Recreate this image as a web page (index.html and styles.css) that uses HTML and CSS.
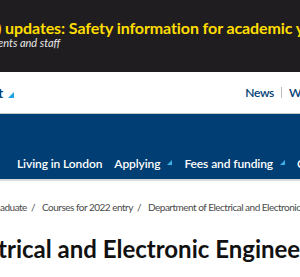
FILE: index.html
```html
<!DOCTYPE html>
<html lang="en">
<head>
<meta charset="utf-8">
<link rel="stylesheet" href="styles.css">
</head>
<body>
<div class="page">
  <div class="alert">
    <p class="alert-title">) updates: Safety information for academic year 2021–22</p>
    <p class="alert-sub">ents and staff</p>
  </div>
  <div class="header">
    <div class="brand">t<span class="tri"></span></div>
    <div class="quick">
      <a class="quick-link">News</a>
      <span class="quick-sep"></span>
      <a class="quick-link">What's on</a>
    </div>
  </div>
  <nav class="nav">
    <span class="nav-tail"></span>
    <span class="nav-sep"></span>
    <a class="nav-item">Living in London</a>
    <span class="nav-sep"></span>
    <a class="nav-item">Applying<span class="tri small"></span></a>
    <span class="nav-sep"></span>
    <a class="nav-item">Fees and funding<span class="tri small"></span></a>
    <span class="nav-sep"></span>
    <a class="nav-item">Contact us</a>
  </nav>
  <div class="crumbs">
    <span>aduate</span><span class="slash">/</span>
    <span>Courses for 2022 entry</span><span class="slash">/</span>
    <span>Department of Electrical and Electronic Engineering</span>
  </div>
  <h1 class="title">trical and Electronic Engineering</h1>
</div>
</body>
</html>
```
FILE: styles.css
```css
html, body {
  margin: 0;
  padding: 0;
  background: #fff;
}
.page {
  width: 300px;
  height: 277px;
  overflow: hidden;
  font-family: Lato, "Open Sans", sans-serif;
  white-space: nowrap;
}
.alert {
  background: #1f1d1f;
  height: 72px;
  box-sizing: border-box;
  padding-top: 19px;
  overflow: hidden;
}
.alert-title {
  margin: 0 0 0 -3px;
  color: #ffdd00;
  font-weight: 700;
  font-size: 16px;
  letter-spacing: -0.1px;
  line-height: 18px;
}
.alert-sub {
  margin: -1px 0 0 -2px;
  color: #e8e8e8;
  font-style: italic;
  font-size: 11px;
  line-height: 14px;
}
.header {
  height: 41px;
  border-bottom: 1px solid #c9c9c9;
  display: flex;
  align-items: center;
  justify-content: space-between;
  overflow: hidden;
}
.brand {
  margin-left: -2px;
  color: #003e74;
  font-weight: 700;
  font-size: 14px;
  display: flex;
  align-items: flex-end;
  gap: 5px;
}
.tri {
  display: inline-block;
  width: 0;
  height: 0;
  border-left: 6px solid transparent;
  border-bottom: 6px solid #1ea4e0;
  margin-bottom: 3px;
}
.tri.small {
  border-left-width: 5px;
  border-bottom-width: 5px;
  border-bottom-color: #3bb0e6;
  margin-left: 7px;
  margin-bottom: 4px;
}
.quick {
  display: flex;
  align-items: center;
  gap: 7px;
  margin-right: -40px;
}
.quick-link {
  color: #003e74;
  font-size: 12px;
  font-weight: 600;
  letter-spacing: -0.3px;
}
.quick-sep {
  width: 1px;
  height: 11px;
  background: #bbb;
}
.nav {
  background: #003e74;
  height: 67px;
  box-sizing: border-box;
  padding-bottom: 7px;
  border-bottom: 2px solid #dcdcdc;
  display: flex;
  align-items: flex-end;
  gap: 6px;
  overflow: hidden;
}
.nav-tail {
  width: 2px;
  height: 2px;
  background: #8a9fb8;
  margin-right: 5px;
  margin-bottom: 7px;
}
.nav-sep {
  width: 1px;
  height: 14px;
  margin-bottom: 1px;
  background: #3b6a98;
}
.nav-item {
  color: #fff;
  font-size: 12px;
  font-weight: 600;
  letter-spacing: -0.1px;
  line-height: 16px;
  display: flex;
  align-items: center;
}
.crumbs {
  margin: 19px 0 0 0;
  font-size: 10px;
  letter-spacing: -0.5px;
  color: #4a4a4a;
  line-height: 14px;
}
.slash {
  margin: 0 5px 0 4px;
}
.title {
  margin: 20px 0 0 -2px;
  font-size: 24px;
  line-height: 30px;
  font-weight: 700;
  color: #111;
}
```
